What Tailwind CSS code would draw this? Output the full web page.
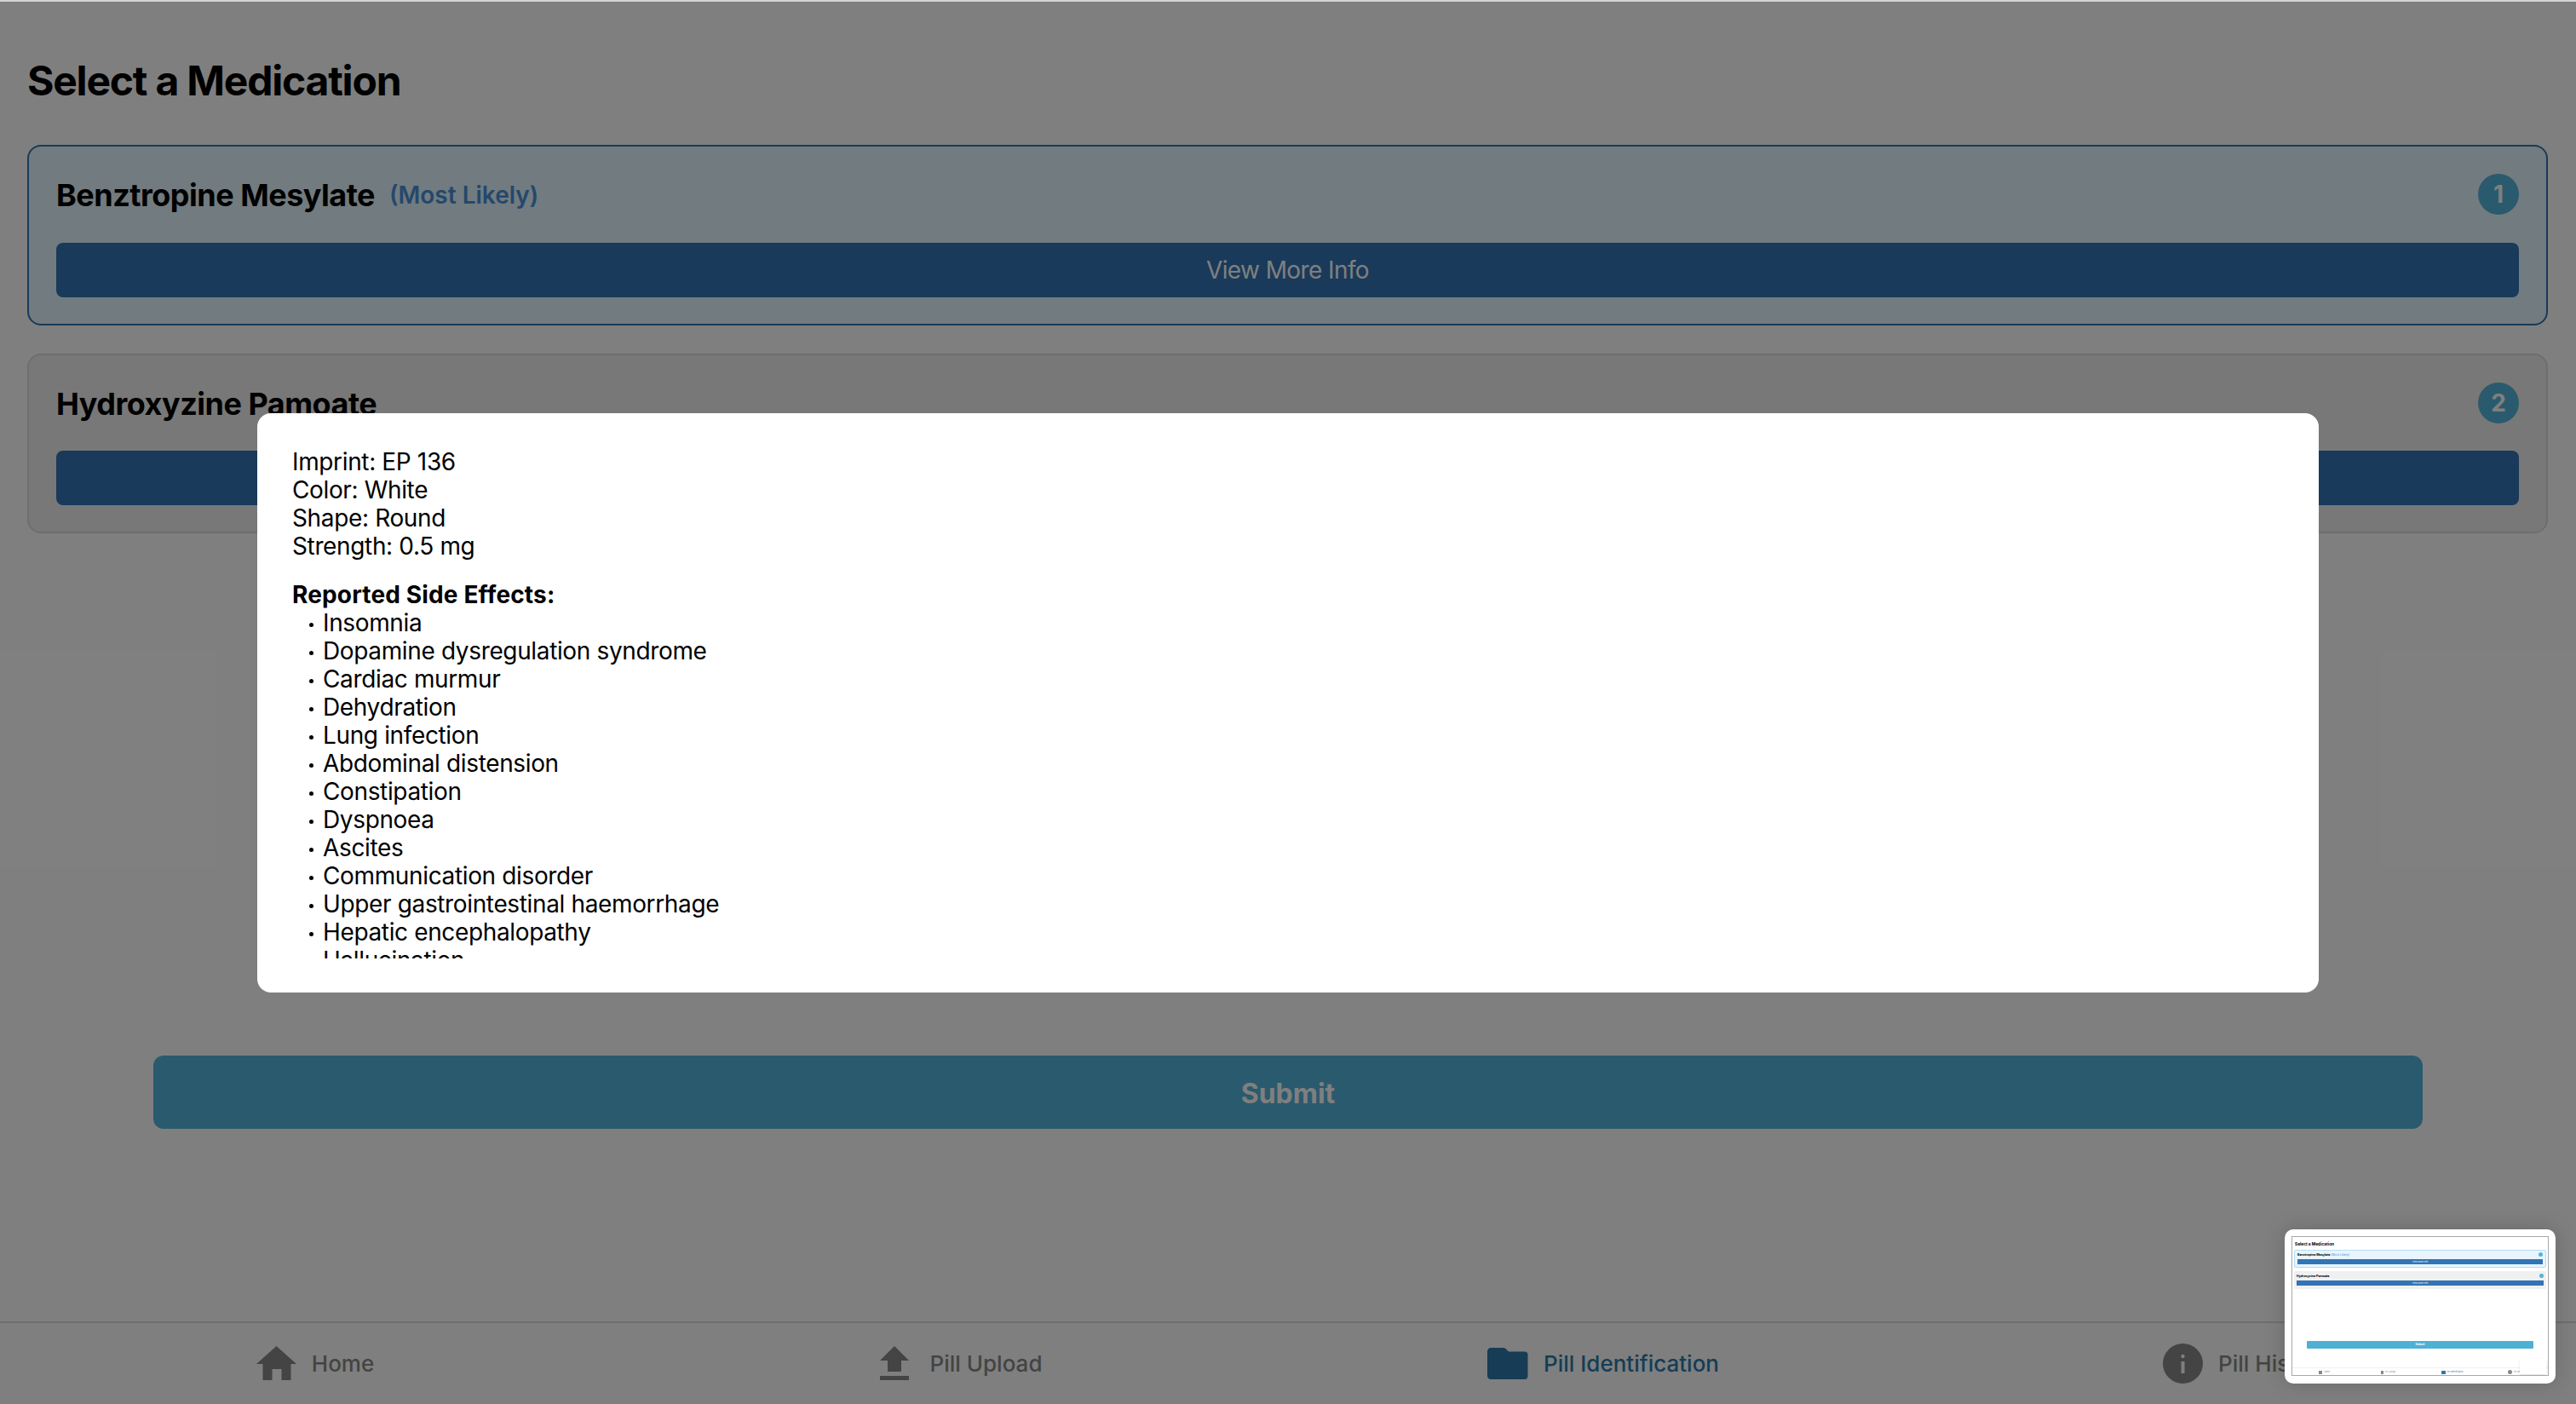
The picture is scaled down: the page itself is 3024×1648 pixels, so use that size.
<!DOCTYPE html>
<html lang="en">
<head>
    <meta charset="UTF-8">
    <meta name="viewport" content="width=device-width, initial-scale=1.0">
    <title>Select a Medication</title>
    <script src="https://cdn.jsdelivr.net/npm/@tailwindcss/browser@4"></script>
</head>
<body class="bg-white font-['Inter',sans-serif] text-black overflow-hidden">
    <div class="relative flex flex-col w-[3024px] h-[1648px] border-t-2 border-[#d4d4d4] overflow-hidden">

        <!-- Medication list -->
        <main class="flex-1 pl-[32px] pr-[33px]">
            <h1 class="mt-[63px] h-[60px] text-[48px] leading-[60px] font-bold tracking-[-1.2px]">Select a Medication</h1>

            <div class="mt-[45px] rounded-[16px] border-2 border-[#3274b4] bg-[#e4f6fe] pt-[32px] px-[32px] pb-[31px]">
                <div class="flex items-center justify-between h-[48px] mb-[33px]">
                    <div class="flex items-center gap-[17px] pt-[2px]">
                        <span class="text-[36px] font-bold tracking-[-0.5px]">Benztropine Mesylate</span>
                        <span class="text-[28px] font-semibold text-[#4890d8]">(Most Likely)</span>
                    </div>
                    <span class="flex items-center justify-center w-[48px] h-[48px] rounded-full bg-[#54b4da] text-white text-[28px] font-bold">1</span>
                </div>
                <button class="block w-full h-[64px] rounded-[8px] bg-[#3274b4] text-white text-[28px] tracking-[-0.6px]">View More Info</button>
            </div>

            <div class="mt-[33px] rounded-[16px] border-2 border-[#dddddd] bg-[#f0f0f0] pt-[32px] px-[32px] pb-[31px]">
                <div class="flex items-center justify-between h-[48px] mb-[32px]">
                    <span class="pt-[2px] text-[36px] font-bold tracking-[-0.5px]">Hydroxyzine Pamoate</span>
                    <span class="flex items-center justify-center w-[48px] h-[48px] rounded-full bg-[#54b4da] text-white text-[28px] font-bold">2</span>
                </div>
                <button class="block w-full h-[64px] rounded-[8px] bg-[#3274b4] text-white text-[28px] tracking-[-0.6px]">View More Info</button>
            </div>

            <button class="block mt-[613px] ml-[148px] w-[2664px] h-[86px] pt-[3px] rounded-[12px] bg-[#54b4da] text-white text-[32px] font-bold">Submit</button>
        </main>

        <!-- Bottom nav -->
        <nav class="grid grid-cols-4 h-[97px] border-t-2 border-[#dedede] text-[26px] font-medium text-[#888888]">
            <a class="flex items-center justify-center gap-[17px] pr-[16px]">
                <svg class="w-[48px] h-[41px] fill-current" viewBox="0 0 48 41"><path d="M23.5 0 47 21H40.5V40H29.5V27H18.5V40H7.5V21H0Z"/></svg>
                <span>Home</span>
            </a>
            <a class="flex items-center justify-center gap-[25px] pr-[12px]">
                <svg class="w-[34px] h-[41px] fill-current" viewBox="0 0 34 41"><path d="M17 0 34 17H25V30H9V17H0ZM0 35H34V40H0Z"/></svg>
                <span>Pill Upload</span>
            </a>
            <a class="flex items-center justify-center gap-[18px] pr-[16px] text-[#2c7aaa]">
                <svg class="w-[48px] h-[38px] fill-current" viewBox="0 0 48 38"><path d="M4 0H18C20 0 21 .5 22 1.5L25 4.5H44C46 4.5 47.500 6 47.500 8V33C47.500 35.500 46 37 44 37H4C2 37 0 35.500 0 33V4C0 2 2 0 4 0Z"/></svg>
                <span>Pill Identification</span>
            </a>
            <a class="flex items-center justify-center gap-[18px] pr-[16px]">
                <svg class="w-[47px] h-[47px]" viewBox="0 0 47 47"><circle cx="23.5" cy="23.5" r="23.5" fill="currentColor"/><rect x="21.500" y="21" width="4" height="14" fill="#fff"/><circle cx="23.500" cy="15" r="2.200" fill="#fff"/></svg>
                <span>Pill History</span>
            </a>
        </nav>

        <!-- Modal overlay -->
        <div class="absolute inset-0 bg-black/50 flex items-center justify-center">
            <div class="w-[2420px] h-[680px] rounded-[16px] bg-white p-[40px]">
                <div class="h-[600px] overflow-hidden pt-[1px] pl-[1px] text-[28px] leading-[33px] tracking-[-0.36px]">
                    <p>Imprint: EP 136</p>
                    <p>Color: White</p>
                    <p>Shape: Round</p>
                    <p>Strength: 0.5 mg</p>
                    <p class="mt-[24px] font-bold tracking-[0.15px]">Reported Side Effects:</p>
                    <ul class="pl-[36px] [&>li]:relative [&>li]:before:absolute [&>li]:before:content-[''] [&>li]:before:left-[-16px] [&>li]:before:top-[16px] [&>li]:before:w-[5px] [&>li]:before:h-[5px] [&>li]:before:rounded-full [&>li]:before:bg-black">
                        <li>Insomnia</li>
                        <li>Dopamine dysregulation syndrome</li>
                        <li>Cardiac murmur</li>
                        <li>Dehydration</li>
                        <li>Lung infection</li>
                        <li>Abdominal distension</li>
                        <li>Constipation</li>
                        <li>Dyspnoea</li>
                        <li>Ascites</li>
                        <li>Communication disorder</li>
                        <li>Upper gastrointestinal haemorrhage</li>
                        <li>Hepatic encephalopathy</li>
                        <li>Hallucination</li>
                    </ul>
                </div>
            </div>
        </div>

        <!-- Floating screenshot thumbnail -->
        <div class="absolute left-[2682px] top-[1441px] w-[318px] h-[181px] rounded-[10px] bg-white p-[8px] shadow-[0_0_24px_rgba(0,0,0,0.18)]">
            <div class="relative w-[302px] h-[164px] border border-[#a8a8a8] bg-white overflow-hidden">
                <p class="absolute left-[3px] top-[5px] text-[4.800px] leading-[7px] font-bold">Select a Medication</p>
                <div class="absolute left-[2px] top-[15px] w-[296px] h-[21px] rounded-[2px] border border-[#b5dcf3] bg-[#e8f5fd] px-[3px]">
                    <p class="mb-[1px] pt-[1px] text-[3.600px] leading-[8px] font-bold">Benztropine Mesylate <span class="text-[#4890d8] font-normal">(Most Likely)</span></p>
                    <div class="absolute right-[3px] top-[2px] w-[5px] h-[5px] rounded-full bg-[#54b4da]"></div>
                    <div class="h-[6px] bg-[#3274b4] text-center text-[2.600px] leading-[6px] text-white">View More Info</div>
                </div>
                <div class="absolute left-[2px] top-[40px] w-[296px] h-[21px] rounded-[2px] bg-[#f0f0f0] px-[3px]">
                    <p class="mb-[1px] pt-[2px] text-[3.600px] leading-[8px] font-bold">Hydroxyzine Pamoate</p>
                    <div class="absolute right-[3px] top-[3px] w-[5px] h-[5px] rounded-full bg-[#54b4da]"></div>
                    <div class="h-[6px] bg-[#3274b4] text-center text-[2.600px] leading-[6px] text-white">View More Info</div>
                </div>
                <div class="absolute left-[17px] top-[122px] w-[266px] h-[9px] rounded-[1px] bg-[#4fb0d6] text-center text-[3.200px] leading-[9px] font-bold text-white">Submit</div>
                <div class="absolute left-0 right-0 top-[153px] h-[10px] border-t border-[#efefef] text-[2.400px] text-[#888888] grid grid-cols-4">
                    <span class="flex items-center justify-center gap-[2px]"><i class="w-[4px] h-[4px] bg-[#888888]"></i>Home</span>
                    <span class="flex items-center justify-center gap-[2px]"><i class="w-[3px] h-[4px] bg-[#888888]"></i>Pill Upload</span>
                    <span class="flex items-center justify-center gap-[2px] text-[#2c7aaa]"><i class="w-[5px] h-[4px] bg-[#2c7aaa]"></i>Pill Identification</span>
                    <span class="flex items-center justify-center gap-[2px]"><i class="w-[5px] h-[5px] rounded-full bg-[#888888]"></i>Pill History</span>
                </div>
                <div class="absolute left-[267px] top-[143px] w-[31px] h-[18px] bg-white shadow-sm"></div>
            </div>
        </div>
    </div>
</body>
</html>
